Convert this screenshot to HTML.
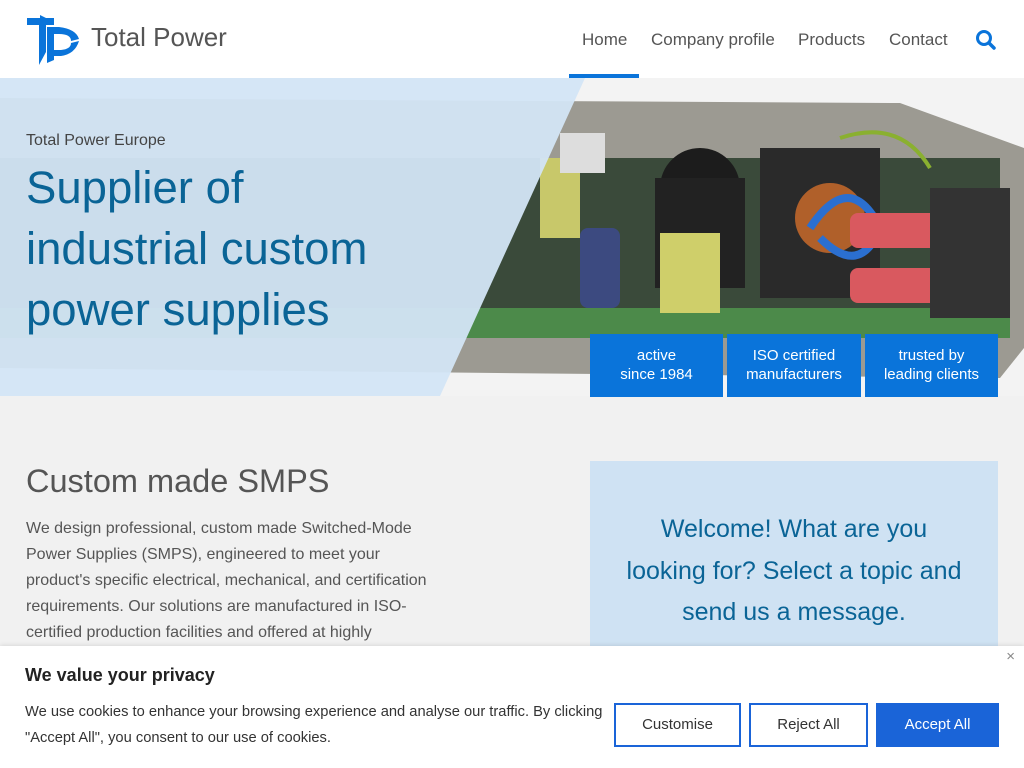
<!DOCTYPE html>
<html><head><meta charset="utf-8"><style>
*{margin:0;padding:0;box-sizing:border-box}
body{width:1024px;height:768px;overflow:hidden;background:#f1f1f1;font-family:"Liberation Sans",sans-serif;position:relative}
.hdr{position:absolute;left:0;top:0;width:1024px;height:78px;background:#fff}
.logo-t{position:absolute;left:91px;top:22px;font-size:26px;color:#555}
.nav{position:absolute;top:30px;font-size:17px;color:#555}
.ul{position:absolute;left:569px;top:74px;width:70px;height:4px;background:#0a74da}
.hero{position:absolute;left:0;top:78px;width:1024px;height:318px;overflow:hidden}
.h1{position:absolute;left:26px;font-size:45.5px;color:#0a6496}
.badge{position:absolute;top:334px;height:63px;background:#0a74da;color:#fff;font-size:15px;text-align:center;line-height:19px;padding-top:12px}
.sec h2{position:absolute;left:26px;top:463px;font-size:32.5px;font-weight:normal;color:#555}
.p{position:absolute;left:26px;top:516px;width:422px;font-size:16px;line-height:26px;color:#555}
.box{position:absolute;left:590px;top:461px;width:408px;height:200px;background:#cfe2f3;color:#0a6496;font-size:25px;line-height:41.5px;text-align:center;padding-top:48px}
.ck{position:absolute;left:0;top:646px;width:1024px;height:122px;background:#fff;box-shadow:0 -1px 4px rgba(0,0,0,.1)}
.btn{position:absolute;top:57px;height:44px;border:2px solid #1a64d8;font-size:15px;color:#333;text-align:center;line-height:40px;background:#fff}
</style></head><body>
<div class="hdr">
<svg style="position:absolute;left:26px;top:14px" width="54" height="52" viewBox="0 0 54 52">
<path d="M1 4 H14 V1 L20 4 H28 V11 H20 V38 L13 51 V11 H1 Z" fill="#0a74da"/>
<path d="M21 13 H33 Q50 15 53 25 L45 27 Q45 20 33 20 H28 V46 L21 49 Z" fill="#0a74da"/>
<path d="M28 36 H35 Q45 35 45 29 L53 27 Q49 40 35 42 H28Z" fill="#0a74da"/>
</svg>
<div class="logo-t">Total Power</div>
<div class="nav" style="left:582px">Home</div>
<div class="nav" style="left:651px">Company profile</div>
<div class="nav" style="left:798px">Products</div>
<div class="nav" style="left:889px">Contact</div>
<svg style="position:absolute;left:975px;top:29px" width="22" height="22" viewBox="0 0 22 22"><circle cx="9" cy="9" r="6.5" fill="none" stroke="#0a74da" stroke-width="3"/><path d="M14 14 L19 19" stroke="#0a74da" stroke-width="3.5" stroke-linecap="round"/></svg>
<div class="ul"></div>
</div>
<div class="hero">
<svg width="1024" height="318" style="position:absolute;left:0;top:0">
<rect width="1024" height="318" fill="#f3f3f3"/>
<polygon points="0,20 900,25 1024,70 1024,270 1000,300 0,290" fill="#9c9a92"/>
<rect x="0" y="80" width="1000" height="180" fill="#3a4a3a"/>
<rect x="0" y="230" width="1010" height="30" fill="#4c8a4a"/>
<circle cx="700" cy="110" r="40" fill="#1c1c1c"/>
<rect x="655" y="100" width="90" height="110" fill="#222"/>
<rect x="660" y="155" width="60" height="80" fill="#cfcf6a"/>
<rect x="760" y="70" width="120" height="150" fill="#2a2a2a"/>
<circle cx="830" cy="140" r="35" fill="#b0602a"/>
<path d="M810 150 Q850 90 880 150 Q860 200 820 160" stroke="#2b6fd0" stroke-width="8" fill="none"/>
<rect x="850" y="135" width="130" height="35" rx="8" fill="#d9595f"/>
<rect x="850" y="190" width="130" height="35" rx="8" fill="#d9595f"/>
<rect x="930" y="110" width="80" height="130" fill="#333"/>
<rect x="580" y="150" width="40" height="80" rx="8" fill="#3c4a80"/>
<rect x="540" y="80" width="40" height="80" fill="#c8c86a"/>
<rect x="560" y="55" width="45" height="40" fill="#ddd"/>
<path d="M840 60 Q900 40 930 90" stroke="#8ab030" stroke-width="4" fill="none"/>
<polygon points="0,0 585,0 440,318 0,318" fill="#d3e5f5" opacity=".95"/>
</svg>
<div style="position:absolute;left:26px;top:54px;font-size:16px;color:#444">Total Power Europe</div>
<div class="h1" style="top:84px">Supplier of</div>
<div class="h1" style="top:145px">industrial custom</div>
<div class="h1" style="top:206px">power supplies</div>
</div>
<div class="badge" style="left:590px;width:133px">active<br>since 1984</div>
<div class="badge" style="left:727px;width:134px">ISO certified<br>manufacturers</div>
<div class="badge" style="left:865px;width:133px">trusted by<br>leading clients</div>
<div class="sec"><h2>Custom made SMPS</h2></div>
<div class="p">We design professional, custom made Switched-Mode Power Supplies (SMPS), engineered to meet your product's specific electrical, mechanical, and certification requirements. Our solutions are manufactured in ISO-certified production facilities and offered at highly</div>
<div class="box">Welcome! What are you<br>looking for? Select a topic and<br>send us a message.</div>
<div class="ck">
<div style="position:absolute;right:9px;top:2px;font-size:15px;color:#888">×</div>
<div style="position:absolute;left:25px;top:19px;font-size:18px;font-weight:bold;color:#222">We value your privacy</div>
<div style="position:absolute;left:25px;top:53px;width:590px;font-size:14.7px;line-height:26px;color:#333">We use cookies to enhance your browsing experience and analyse our traffic. By clicking "Accept All", you consent to our use of cookies.</div>
<div class="btn" style="left:614px;width:127px">Customise</div>
<div class="btn" style="left:749px;width:119px">Reject All</div>
<div class="btn" style="left:876px;width:123px;background:#1a64d8;color:#fff">Accept All</div>
</div>
</body></html>
